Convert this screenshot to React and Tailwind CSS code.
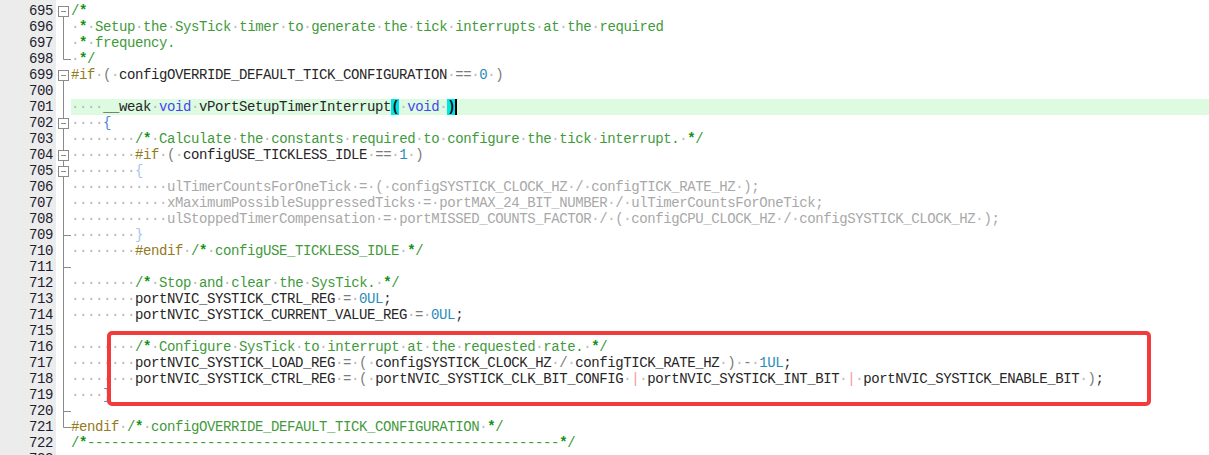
import React from "react";

const K = {
  ws: "text-[#b9b9b9]",
  cm: "text-[#3f9a3c]",
  star: "text-[#129212] font-bold",
  pp: "text-[#937a1e]",
  id: "text-[#262626]",
  op: "text-[#7c7c7c]",
  semi: "text-[#333333]",
  num: "text-[#2a8cb8]",
  kw: "text-[#4646ee]",
  brace: "text-[#4f84d4]",
  pipe: "text-[#f09a9a]",
  off: "text-[#a8a8a8]",
  offBrace: "text-[#a9c3e6]",
  brk: "bg-[#00e6e6] text-[#111111] font-bold",
};

const LINES = [
  { n: 694, f: "none", m: "code", t: "" },
  { n: 695, f: "box", m: "comment", t: "/*" },
  { n: 696, f: "line", m: "comment", t: "·*·Setup·the·SysTick·timer·to·generate·the·tick·interrupts·at·the·required" },
  { n: 697, f: "line", m: "comment", t: "·*·frequency." },
  { n: 698, f: "end", m: "comment", t: "·*/" },
  { n: 699, f: "box", m: "code", t: "#if·(·configOVERRIDE_DEFAULT_TICK_CONFIGURATION·==·0·)" },
  { n: 700, f: "line", m: "code", t: "" },
  { n: 701, f: "line", m: "special", t: "" },
  { n: 702, f: "boxIn", m: "code", t: "····{" },
  { n: 703, f: "line", m: "code", t: "········/*·Calculate·the·constants·required·to·configure·the·tick·interrupt.·*/" },
  { n: 704, f: "boxIn", m: "code", t: "········#if·(·configUSE_TICKLESS_IDLE·==·1·)" },
  { n: 705, f: "boxIn", m: "off", t: "········{" },
  { n: 706, f: "line", m: "off", t: "············ulTimerCountsForOneTick·=·(·configSYSTICK_CLOCK_HZ·/·configTICK_RATE_HZ·);" },
  { n: 707, f: "line", m: "off", t: "············xMaximumPossibleSuppressedTicks·=·portMAX_24_BIT_NUMBER·/·ulTimerCountsForOneTick;" },
  { n: 708, f: "line", m: "off", t: "············ulStoppedTimerCompensation·=·portMISSED_COUNTS_FACTOR·/·(·configCPU_CLOCK_HZ·/·configSYSTICK_CLOCK_HZ·);" },
  { n: 709, f: "tick", m: "off", t: "········}" },
  { n: 710, f: "line", m: "code", t: "········#endif·/*·configUSE_TICKLESS_IDLE·*/" },
  { n: 711, f: "tick", m: "code", t: "" },
  { n: 712, f: "line", m: "code", t: "········/*·Stop·and·clear·the·SysTick.·*/" },
  { n: 713, f: "line", m: "code", t: "········portNVIC_SYSTICK_CTRL_REG·=·0UL;" },
  { n: 714, f: "line", m: "code", t: "········portNVIC_SYSTICK_CURRENT_VALUE_REG·=·0UL;" },
  { n: 715, f: "line", m: "code", t: "" },
  { n: 716, f: "line", m: "code", t: "········/*·Configure·SysTick·to·interrupt·at·the·requested·rate.·*/" },
  { n: 717, f: "line", m: "code", t: "········portNVIC_SYSTICK_LOAD_REG·=·(·configSYSTICK_CLOCK_HZ·/·configTICK_RATE_HZ·)·-·1UL;" },
  { n: 718, f: "line", m: "code", t: "········portNVIC_SYSTICK_CTRL_REG·=·(·portNVIC_SYSTICK_CLK_BIT_CONFIG·|·portNVIC_SYSTICK_INT_BIT·|·portNVIC_SYSTICK_ENABLE_BIT·);" },
  { n: 719, f: "line", m: "code", t: "····}" },
  { n: 720, f: "tick", m: "code", t: "" },
  { n: 721, f: "end", m: "code", t: "#endif·/*·configOVERRIDE_DEFAULT_TICK_CONFIGURATION·*/" },
  { n: 722, f: "none", m: "comment", t: "/*-----------------------------------------------------------*/" },
  { n: 723, f: "none", m: "code", t: "" },
];

// comment text: stars and dots get their own colour
function commentSegs(s) {
  return s
    .split(/(\*+|·+)/)
    .filter(Boolean)
    .map((p) => [p[0] === "*" ? K.star : p[0] === "·" ? K.ws : K.cm, p]);
}

function tokenize(line, mode) {
  if (mode === "comment") return commentSegs(line);
  if (mode === "off") {
    return line
      .split(/(·+|[{}])/)
      .filter(Boolean)
      .map((p) => [p[0] === "·" ? K.ws : p === "{" || p === "}" ? K.offBrace : K.off, p]);
  }
  const out = [];
  const re = /(\/\*.*$)|(#\w+)|(\d+UL|\d+)|(\bvoid\b)|([A-Za-z_]\w*)|([{}])|(\|)|(·+)|(;)|(.)/g;
  let m;
  while ((m = re.exec(line))) {
    if (m[1]) out.push(...commentSegs(m[1]));
    else if (m[2]) out.push([K.pp, m[2]]);
    else if (m[3]) out.push([K.num, m[3]]);
    else if (m[4]) out.push([K.kw, m[4]]);
    else if (m[5]) out.push([K.id, m[5]]);
    else if (m[6]) out.push([K.brace, m[6]]);
    else if (m[7]) out.push([K.pipe, m[7]]);
    else if (m[8]) out.push([K.ws, m[8]]);
    else if (m[9]) out.push([K.semi, m[9]]);
    else out.push([K.op, m[10]]);
  }
  return out;
}

const SPECIAL = [
  [K.ws, "····"],
  [K.id, "__weak"],
  [K.ws, "·"],
  [K.kw, "void"],
  [K.ws, "·"],
  [K.id, "vPortSetupTimerInterrupt"],
  [K.brk, "("],
  [K.ws, "·"],
  [K.kw, "void"],
  [K.ws, "·"],
  [K.brk, ")"],
];

function Fold({ type }) {
  const c = "#8a8a8a";
  return (
    <svg width="15" height="16" viewBox="0 0 15 16" className="block">
      {type === "line" && <line x1="7.5" y1="0" x2="7.5" y2="16" stroke={c} />}
      {type === "tick" && (
        <>
          <line x1="7.5" y1="0" x2="7.5" y2="16" stroke={c} />
          <line x1="7.5" y1="8.5" x2="15" y2="8.5" stroke={c} />
        </>
      )}
      {type === "end" && (
        <>
          <line x1="7.5" y1="0" x2="7.5" y2="8.5" stroke={c} />
          <line x1="7.5" y1="8.5" x2="15" y2="8.5" stroke={c} />
        </>
      )}
      {(type === "box" || type === "boxIn") && (
        <>
          {type === "boxIn" && <line x1="7.5" y1="0" x2="7.5" y2="3.5" stroke={c} />}
          <rect x="2.5" y="3.5" width="10" height="10" fill="#fff" stroke={c} />
          <line x1="5" y1="8.5" x2="10" y2="8.5" stroke={c} />
          <line x1="7.5" y1="13.5" x2="7.5" y2="16" stroke={c} />
        </>
      )}
    </svg>
  );
}

function Row({ line }) {
  const segs = line.m === "special" ? SPECIAL : tokenize(line.t, line.m);
  return (
    <div className="flex h-4 leading-4">
      <div className="w-[56px] shrink-0 bg-[#ececec] pr-[3px] text-right text-[#1c1c30]">{line.n}</div>
      <div className="w-[15px] shrink-0">
        <Fold type={line.f} />
      </div>
      <div className={"flex-1 whitespace-pre " + (line.m === "special" ? "bg-[#ddfbe0]" : "")}>
        {segs.map(([cls, t], i) => (
          <span key={i} className={cls}>
            {t}
          </span>
        ))}
        {line.m === "special" && <span className="inline-block h-4 w-[2px] bg-black align-top" />}
      </div>
    </div>
  );
}

export default function App() {
  return (
    <div className="relative h-[455px] w-[1209px] overflow-hidden bg-white font-['Liberation_Mono',monospace] text-[14px] tracking-[-0.4px]">
      <div className="-mt-[13px] flex flex-col">
        {LINES.map((l) => (
          <Row key={l.n} line={l} />
        ))}
      </div>
      {/* red annotation box */}
      <div className="pointer-events-none absolute left-[107px] top-[331px] h-[75px] w-[1044px] rounded-[5px] border-4 border-[#f23b3b]" />
    </div>
  );
}
